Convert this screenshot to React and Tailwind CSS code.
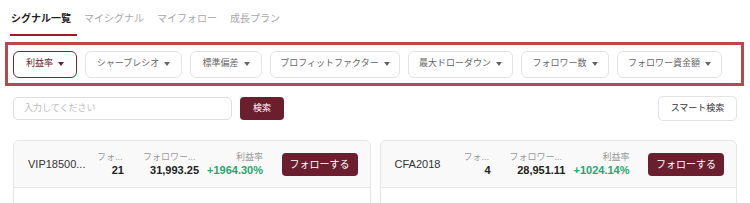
import React from "react";

const tabs = ["シグナル一覧", "マイシグナル", "マイフォロー", "成長プラン"];
const filters = [
  { label: "利益率", w: "w-[64px]" },
  { label: "シャープレシオ", w: "w-[97px]" },
  { label: "標準偏差", w: "w-[72px]" },
  { label: "プロフィットファクター", w: "w-[130px]" },
  { label: "最大ドローダウン", w: "w-[105px]" },
  { label: "フォロワー数", w: "w-[88px]" },
  { label: "フォロワー資金額", w: "w-[105px]" },
];

const signals = [
  { name: "VIP18500...", count: "21", funds: "31,993.25", rate: "+1964.30%" },
  { name: "CFA2018", count: "4", funds: "28,951.11", rate: "+1024.14%" },
];

const Caret = () => (
  <svg width="6" height="4" viewBox="0 0 6 4" className="ml-[5px] fill-current shrink-0">
    <path d="M0 0h6L3 4z" />
  </svg>
);

const SignalCard = ({ s }) => (
  <div className="flex-1 h-[80px] rounded-t-[6px] border border-[#e6e6e6] bg-white">
    <div className="flex items-center h-[47px] bg-[#f9f9f9] border-b border-[#e8e8e8] rounded-t-[6px] pl-[14px] pr-[12px]">
      <div className="w-[69px] text-[11px] text-[#333] whitespace-nowrap">{s.name}</div>
      <div className="w-[27px] flex flex-col items-stretch">
        <span className="text-[9px] leading-[11px] text-[#999] whitespace-nowrap">フォ...</span>
        <span className="text-[11px] leading-[14px] font-bold text-[#222] text-right">{s.count}</span>
      </div>
      <div className="w-[56px] ml-[19px] flex flex-col">
        <span className="text-[9px] leading-[11px] text-[#999] whitespace-nowrap">フォロワー...</span>
        <span className="text-[11px] leading-[14px] font-bold text-[#222] text-right">{s.funds}</span>
      </div>
      <div className="w-[64px] flex flex-col items-end">
        <span className="text-[9px] leading-[11px] text-[#999]">利益率</span>
        <span className="text-[11px] leading-[14px] font-bold text-[#23a86c]">{s.rate}</span>
      </div>
      <button className="ml-auto w-[76px] h-[23px] rounded-[4px] bg-[#6b1f2e] text-white text-[10px] whitespace-nowrap">
        フォローする
      </button>
    </div>
  </div>
);

export default function App() {
  return (
    <div
      className="w-[750px] h-[203px] overflow-hidden bg-white"
      style={{ fontFamily: '"Liberation Sans", "Noto Sans CJK JP", sans-serif' }}
    >
      {/* tabs */}
      <div className="flex gap-[13px] pl-[11px] pt-[12px] h-[36px]">
        {tabs.map((t, i) => (
          <div
            key={t}
            className={`relative text-[10px] leading-[14px] whitespace-nowrap ${
              i === 0 ? "text-[#222] font-bold" : "text-[#a8a8a8]"
            }`}
          >
            {t}
            {i === 0 && (
              <div className="absolute left-[-1px] top-[22px] w-[67px] h-[2px] bg-[#9b1c24]" />
            )}
          </div>
        ))}
      </div>

      {/* filters */}
      <div className="ml-[5px] mt-[6px] w-[739px] h-[44px] border-[3px] border-[#b9474d] pl-[5px] flex items-center gap-[8px]">
        {filters.map((f, i) => (
          <button
            key={f.label}
            className={`${f.w} h-[27px] shrink-0 flex items-center justify-center rounded-[6px] border text-[9px] whitespace-nowrap ${
              i === 0
                ? "border-[#6b2a35] text-[#6b1f2e]"
                : "border-[#e3e3e3] text-[#666]"
            }`}
          >
            {f.label}
            <Caret />
          </button>
        ))}
      </div>

      {/* search row */}
      <div className="flex items-center pl-[13px] pr-[13px] mt-[10px]">
        <div className="w-[219px] h-[23px] rounded-[5px] border border-[#dedede] flex items-center pl-[10px] text-[9px] text-[#bbb]">
          入力してください
        </div>
        <button className="ml-[8px] w-[44px] h-[23px] rounded-[4px] bg-[#6b1f2e] text-white text-[9px]">
          検索
        </button>
        <button className="ml-auto w-[79px] h-[25px] rounded-[5px] border border-[#e3e3e3] text-[9px] text-[#333] whitespace-nowrap">
          スマート検索
        </button>
      </div>

      {/* cards */}
      <div className="flex gap-[9px] pl-[13px] pr-[13px] mt-[19px]">
        {signals.map((s) => (
          <SignalCard key={s.name} s={s} />
        ))}
      </div>
    </div>
  );
}
